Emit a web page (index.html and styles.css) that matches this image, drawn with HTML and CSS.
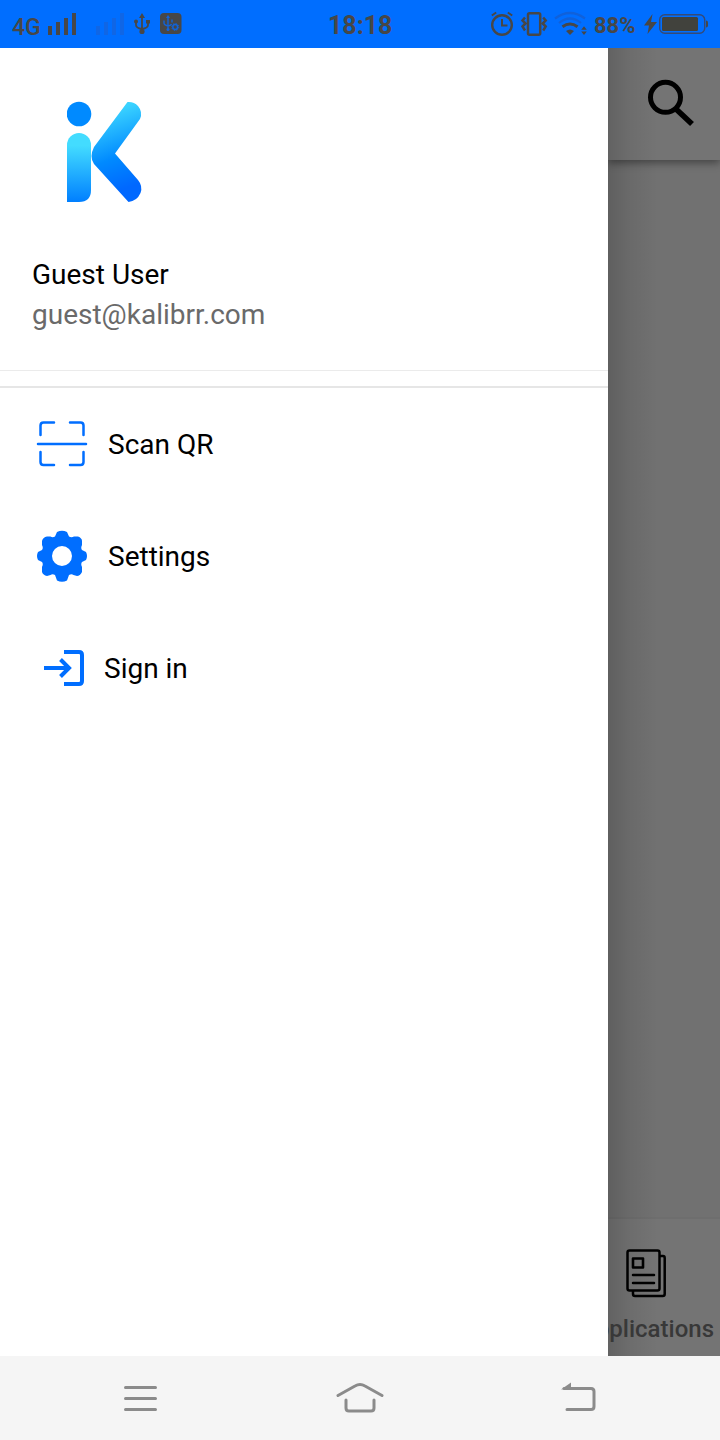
FILE: index.html
```html
<!DOCTYPE html>
<html lang="en">
<head>
<meta charset="utf-8">
<title>Kalibrr</title>
<link rel="stylesheet" href="styles.css">
</head>
<body>
<header class="status">
  <div class="status-left">
    <span class="network">4G</span>
    <svg class="signal" width="28" height="48" viewBox="0 0 28 48"><path d="M0 26h4v9H0zM8 22h4v13H8zM16 18h4v17h-4zM24 13h4v22h-4z"/></svg>
    <svg class="signal faint" width="28" height="48" viewBox="0 0 28 48"><path d="M0 26h4v9H0zM8 22h4v13H8zM16 18h4v17h-4zM24 13h4v22h-4z"/></svg>
    <svg class="usb" width="16" height="48" viewBox="0 0 16 48"><path d="M8 16v16M2 22v3q0 3 6 4q6-1 6-4v-3" fill="none" stroke="#474747" stroke-width="1.800"/><path d="M8 13l3 5H5zM12 20h4v3.500h-4z"/><circle cx="2" cy="21.500" r="2"/><circle cx="8" cy="31.500" r="2.600"/></svg>
    <svg width="22" height="48" viewBox="0 0 22 48"><rect y="13" width="21.500" height="21" rx="4"/><g fill="none" stroke="#1263d8" stroke-width="1.400"><path d="M8 17v12M4 20.500v2.500q0 2 4 3q3-.5 3.500-2M12 19.500v3"/><circle cx="15.200" cy="27" r="2.400" stroke-width="1.500"/><circle cx="15.200" cy="27" r="3.500" stroke-width="1" stroke-dasharray="1.300 1.450"/></g><path d="M8 15l2 3H6z" fill="#1263d8"/><circle cx="8" cy="29.500" r="1.500" fill="#1263d8"/></svg>
  </div>
  <time class="clock">18:18</time>
  <div class="status-right">
    <svg width="24" height="48" viewBox="0 0 24 48" fill="none" stroke="#474747"><circle cx="12" cy="25" r="9.800" stroke-width="2.400"/><path d="M12 19v6.500h5.500M1.800 15.500l4.400-3M17.800 12.500l4.400 3" stroke-width="2"/></svg>
    <svg class="vibrate" width="28" height="48" viewBox="0 0 28 48" fill="none" stroke="#474747" stroke-width="2.500"><rect x="8" y="13.200" width="12.200" height="21.600" rx="1.500"/><path d="M5 17.500L2.500 20.500l3 3-3 3 2.500 4M23.200 17.500l2.500 3-3 3 3 3-2.500 4"/></svg>
    <svg class="wifi" width="34" height="48" viewBox="0 0 34 48" fill="none" stroke-width="2.200"><path d="M1 18.500q15-11 30 0M5 23q11-9 22 0" stroke="#1061da"/><path d="M8.500 26.800q7.500-5.500 15 0" stroke="#474747" stroke-width="3"/><path d="M12 31q4-3 8 0l-4 4zM27.200 29.800l2.800-3.600 2.800 3.600zM27.200 31.500h5.600L30 35z" fill="#474747"/></svg>
    <span class="percent">88%</span>
    <svg class="bolt" width="13" height="48" viewBox="0 0 13 48"><path d="M8.500 14L0 25.500h5L3.500 34 13 22H7z"/></svg>
    <svg class="battery" width="50" height="48" viewBox="0 0 50 48"><rect x=".7" y="14.700" width="45" height="18.600" rx="5" fill="none" stroke="#344a77" stroke-width="1.400"/><rect x="3" y="17" width="36" height="14" rx="1.500" fill="#41423d"/><path d="M47 20.500q2 0 2 2v3q0 2-2 2z"/></svg>
  </div>
</header>

<div class="screen">
  <main class="drawer">
    <section class="profile">
      <svg class="logo" width="76" height="102" viewBox="0 0 76 102">
        <defs>
          <linearGradient id="stem" x1="0" y1="0" x2="0" y2="1"><stop offset=".18" stop-color="#43dcff"/><stop offset="1" stop-color="#007fff"/></linearGradient>
          <linearGradient id="arms" x1=".6" y1="0" x2=".78" y2="1"><stop offset=".05" stop-color="#3bd3ff"/><stop offset=".52" stop-color="#008aff"/><stop offset=".85" stop-color="#0068ff"/></linearGradient>
        </defs>
        <circle cx="12" cy="13" r="12.300" fill="#008aff"/>
        <path d="M0 101V44a12 12 0 0 1 24 0V89q0 12-12 12z" fill="url(#stem)"/>
        <path d="M60.500 1Q67 .5 71 5q5 6 2 13L48 52.500 71 79q5 6 2.500 13-3.500 8-12 9L27 63q-5-7 0-17z" fill="url(#arms)"/>
      </svg>
      <h1 class="name">Guest User</h1>
      <p class="email">guest@kalibrr.com</p>
    </section>
    <nav class="menu">
      <a class="item">
        <svg width="52" height="52" viewBox="0 0 52 52" fill="none" stroke="#006eff" stroke-width="2.500" stroke-linecap="round" stroke-linejoin="round"><path d="M4.500 17V7.500q0-3 3-3H18M34 4.500h10.500q3 0 3 3V17M4.500 34v10q0 3 3 3H18M34 47h10.500q3 0 3-3V34M2 26h48"/></svg>
        <span>Scan QR</span>
      </a>
      <a class="item">
        <svg width="52" height="52" viewBox="0 0 52 52"><path fill="#006eff" fill-rule="evenodd" d="M21 2Q26 -.5 31 2L33 6.500Q35.500 8 38 6.500H42Q46 8 46 11V15Q44.500 18 46 20L50 22Q52 26 50 30L46 32Q44.500 34 46 37V42Q44 46 41 46L37.500 45Q35.500 43.500 33 45L31 50.500Q26 53 21 50.500L19 45Q16.500 43.500 14.500 45L11 46Q7 45 6 42V37Q7.500 34 6 32L2 30Q0 26 2 22L6 20Q7.500 18 6 15V11Q7 7 11 6.500H14.500Q16.500 8 19 6.500ZM26 16a10 10 0 1 0 0 20a10 10 0 1 0 0-20Z"/></svg>
        <span>Settings</span>
      </a>
      <a class="item signin">
        <svg width="42" height="40" viewBox="0 0 42 40" fill="none" stroke="#006eff" stroke-width="4"><path d="M20 4h15q3 0 3 3v26q0 3-3 3H20M0 20h25M16.500 11.500l8.500 8.500-8.500 8.500"/></svg>
        <span>Sign in</span>
      </a>
    </nav>
  </main>
  <aside class="behind">
    <div class="toolbar"><svg width="48" height="48" viewBox="0 0 48 48" fill="none" stroke="#000"><circle cx="18.500" cy="18.300" r="15" stroke-width="5"/><path d="M29.500 30.500L45 45" stroke-width="5.600"/></svg></div>
    <div class="content"></div>
    <div class="tab">
      <svg width="40" height="50" viewBox="0 0 40 50" fill="none" stroke="#000" stroke-width="2.500" stroke-linejoin="round" stroke-linecap="round"><path d="M3.500 2.500h28q2 0 2 2v36q0 2-2 2h-28q-2 0-2-2v-36q0-2 2-2zM34 8h3q1.700 0 1.700 2v36q0 2-2 2H9q-2 0-2-2v-3M7 27h21M7 35h21"/><path d="M7 10.500h10v9H7z" stroke-width="2.600"/></svg>
      <span>Applications</span>
    </div>
  </aside>
</div>

<footer class="system">
  <svg width="34" height="40" viewBox="0 0 34 40"><path d="M1.500 9.500h30M1.500 20.500h30M1.500 31.500h30"/></svg>
  <svg width="48" height="40" viewBox="0 0 48 40"><path d="M2 17.500L19 8q5-3 10 0l17 9.500M10 22v8q0 3 3 3h22q3 0 3-3v-8"/></svg>
  <svg width="36" height="40" viewBox="0 0 36 40"><path d="M6 31.500h24q3 0 3-3v-15q0-3-3-3H3"/><path class="tip" d="M0 11.500l10-7v6z"/></svg>
</footer>
</body>
</html>
```
FILE: styles.css
```css
* { box-sizing: border-box; }
body {
  margin: 0;
  height: 1440px;
  display: flex;
  flex-direction: column;
  font-family: Roboto, "Liberation Sans", sans-serif;
  overflow: hidden;
}
svg { display: block; flex: none; }

.status {
  height: 48px;
  display: flex;
  justify-content: space-between;
  background: #006eff;
  color: #474747;
  fill: #474747;
  white-space: nowrap;
}
.status-left, .status-right { display: flex; }
.status-left { width: 328px; padding-left: 12px; }
.network { width: 36px; font-size: 23px; font-weight: 500; line-height: 55px; }
.faint { margin-left: 20px; fill: #1066e5; }
.usb { margin: 0 10px; }
.clock { width: 66px; font-size: 25px; font-weight: 700; line-height: 51px; }
.status-right { width: 326px; padding-left: 96px; }
.vibrate { margin-left: 6px; }
.wifi { margin-left: 6px; }
.percent { width: 56px; padding-left: 6px; font-size: 22px; font-weight: 700; line-height: 51px; }
.battery { margin-left: 2px; }

.screen { flex: 1; display: flex; min-height: 0; }
.drawer { width: 608px; flex: none; background: #fff; }
.profile {
  height: 323px;
  padding: 53px 32px 0;
  border-bottom: 1px solid #ebebeb;
}
.logo { margin-left: 35px; }
.name, .email { margin: 0; font-size: 28px; font-weight: 400; line-height: 40px; }
.name { margin-top: 52px; color: #000; }
.email { color: #6a6a6a; }
.menu { margin-top: 15px; border-top: 2px solid #e6e6e6; }
.item {
  height: 112px;
  padding-left: 36px;
  display: flex;
  align-items: center;
  gap: 20px;
  font-size: 28px;
  color: #000;
}
.signin { padding-left: 44px; gap: 18px; }

.behind {
  flex: 1;
  min-width: 0;
  overflow: hidden;
  display: flex;
  flex-direction: column;
  background: linear-gradient(90deg, rgba(0,0,0,.16), rgba(0,0,0,.07) 20px, transparent 50px), #717171;
}
.toolbar {
  height: 112px;
  padding: 31px 0 0 39px;
  background: rgba(255,255,255,.025);
  box-shadow: 0 3px 8px rgba(0,0,0,.4);
  clip-path: inset(0 0 -20px 0);
}
.content { flex: 1; }
.tab {
  height: 139px;
  padding-top: 29px;
  border-top: 2px solid rgba(0,0,0,.05);
  display: flex;
  flex-direction: column;
  align-items: flex-end;
  gap: 17px;
  background: rgba(255,255,255,.025);
}
.tab svg { margin-right: 54px; }
.tab span { margin-right: 6px; font-size: 24px; line-height: 28px; font-weight: 500; color: #383838; }

.system {
  height: 84px;
  padding: 0 123px 0 124px;
  display: flex;
  justify-content: space-between;
  align-items: center;
  background: #f5f5f5;
}
.system svg { fill: none; stroke: #8b8b8b; stroke-width: 3px; stroke-linecap: round; stroke-linejoin: round; }
.system .tip { fill: #8b8b8b; stroke: none; }
```
